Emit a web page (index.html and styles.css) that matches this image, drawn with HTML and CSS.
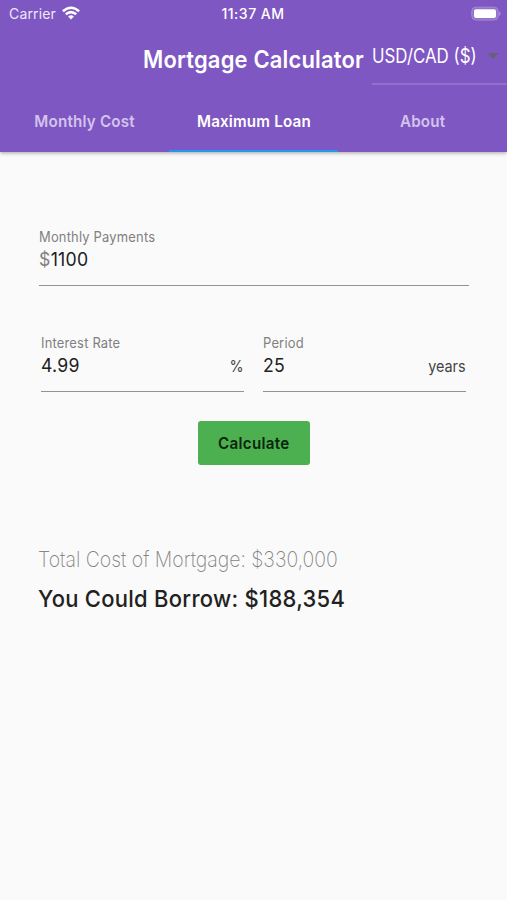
FILE: index.html
```html
<!DOCTYPE html>
<html lang="en">
<head>
<meta charset="utf-8">
<title>Mortgage Calculator</title>
<link rel="stylesheet" href="styles.css">
</head>
<body>
<header class="header">
  <div class="status">
    <div class="carrier"><span class="t carrier-name">Carrier</span>
      <svg class="wifi" width="18" height="14" viewBox="0 0 18 14" fill="none" stroke="#fff" stroke-width="2.5"><path d="M.9 5.2Q9-1.8 17.1 5.2M3.8 8.3Q9 3.9 14.2 8.3"/><path d="M6.1 10.4Q9 8 11.9 10.4L9 13.5Z" fill="#fff" stroke="none"/></svg>
    </div>
    <span class="t time">11:37 AM</span>
    <svg class="battery" width="31" height="16" viewBox="0 0 31 16"><rect x=".8" y="1.2" width="26.4" height="12.8" rx="4" fill="#9273cb" stroke="#a68bd5"/><rect x="3" y="3.2" width="22" height="8.8" rx="2" fill="#fff"/><path d="M28.3 5.2Q31 7.6 28.3 10Z" fill="#b49ddd"/></svg>
  </div>
  <div class="toolbar">
    <h1 class="t title">Mortgage Calculator</h1>
    <div class="currency"><span class="t currency-name">USD/CAD ($)</span><i class="caret"></i></div>
  </div>
  <nav class="tabs">
    <a class="tab"><span class="t tab-monthly">Monthly Cost</span></a>
    <a class="tab active"><span class="t tab-loan">Maximum Loan</span></a>
    <a class="tab"><span class="t tab-about">About</span></a>
  </nav>
</header>
<main class="content">
  <div class="field payments">
    <label class="t label label-payments">Monthly Payments</label>
    <div class="row"><span class="t value value-payments"><span class="prefix">$</span>1100</span></div>
  </div>
  <div class="pair">
    <div class="field">
      <label class="t label label-rate">Interest Rate</label>
      <div class="row"><span class="t value value-rate">4.99</span><span class="t suffix percent">%</span></div>
    </div>
    <div class="field">
      <label class="t label label-period">Period</label>
      <div class="row"><span class="t value value-period">25</span><span class="t suffix years">years</span></div>
    </div>
  </div>
  <button class="calculate"><span class="t calc-text">Calculate</span></button>
  <p class="total"><span class="t total-text">Total Cost of Mortgage: $330,000</span></p>
  <p class="borrow"><span class="t borrow-text">You Could Borrow: $188,354</span></p>
</main>
</body>
</html>
```
FILE: styles.css
```css
* { box-sizing: border-box; }
body { margin: 0; height: 900px; overflow: hidden; background: #fafafa; color: #212121; font-family: Inter, sans-serif; }
.t { display: inline-block; white-space: nowrap; transform-origin: left center; }
.header { height: 152px; background: #7e57c2; color: #fff; box-shadow: 0 1px 4px rgba(0, 0, 0, .35); }
.status { height: 28px; display: grid; grid-template-columns: 1fr 64px 1fr; align-items: center; }
.status .t { position: relative; top: -1px; }
.carrier { display: flex; align-items: center; padding-left: 9px; }
.carrier-name { width: 53px; font-size: 14px; letter-spacing: .15px; color: #eee8f8; }
.wifi { margin-top: -2px; }
.time { font-size: 14px; font-weight: 500; letter-spacing: .5px; }
.battery { justify-self: end; margin-right: 5px; }
.toolbar { height: 63px; display: flex; padding-left: 143px; }
.title { width: 229px; margin: 0; font-size: 24px; font-weight: 600; line-height: 64px; letter-spacing: .2px; transform: scaleX(.914); }
.currency { flex: 1; height: 57px; display: flex; align-items: center; border-bottom: 2px solid #9170ca; }
.currency-name { width: 115px; font-size: 19.5px; line-height: 54px; transform: scaleX(.865); }
.caret { border: 6px solid transparent; border-top-color: #686078; border-bottom: 0; }
.tabs { height: 61px; display: grid; grid-template-columns: repeat(3, 1fr); }
.tab { display: flex; justify-content: center; align-items: center; color: #d3c3ec; font-size: 16.5px; font-weight: 600; letter-spacing: .2px; border-bottom: 2px solid transparent; }
.tab .t { transform-origin: center; transform: scaleX(.92); }
.tab.active { color: #fff; border-color: #2196f3; }
.content { padding: 76px 38px 0 39px; }
.field { height: 58px; border-bottom: 1px solid #929292; }
.label { display: block; height: 18px; font-size: 14px; line-height: 18px; letter-spacing: .2px; color: #808080; transform: scaleX(.925); }
.row { display: flex; justify-content: space-between; height: 28px; align-items: center; }
.value { font-size: 19px; line-height: 28px; letter-spacing: .3px; transform: scaleX(.93); }
.prefix { color: #808080; }
.suffix { font-size: 16px; line-height: 32px; color: #444; transform-origin: right center; transform: scaleX(.9); }
.pair { display: grid; grid-template-columns: 203px 203px; column-gap: 19px; padding-left: 2px; margin-top: 48px; }
.calculate { display: flex; align-items: center; justify-content: center; width: 112px; height: 44px; margin: 29px auto 0 159px; padding: 0; border: 0; border-radius: 3px; background: #4caf50; color: #0c260d; font: 600 16.5px Inter, sans-serif; letter-spacing: .3px; }
.calc-text { transform-origin: center; transform: scaleX(.92); }
.total, .borrow { margin: 0 0 0 -1px; height: 40px; line-height: 40px; }
.total { margin-top: 74px; color: #858585; font-size: 22px; font-weight: 200; }
.borrow { font-size: 23.5px; font-weight: 500; letter-spacing: .3px; }
.total-text { transform: scaleX(.884); }
.borrow-text { transform: scaleX(.935); }
```
